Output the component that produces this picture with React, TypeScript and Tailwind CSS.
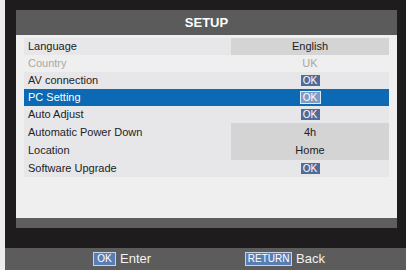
import React from 'react';

type Row = {
  label: string;
  value?: string;
  ok?: boolean;
  cell?: boolean; // grey value cell
  disabled?: boolean;
  selected?: boolean;
  h: string;
  stripe?: boolean;
};

const rows: Row[] = [
  { label: 'Language', value: 'English', cell: true, h: 'h-[17px]', stripe: true },
  { label: 'Country', value: 'UK', disabled: true, h: 'h-[17px]' },
  { label: 'AV connection', ok: true, h: 'h-[17px]', stripe: true },
  { label: 'PC Setting', ok: true, selected: true, h: 'h-[17px]' },
  { label: 'Auto Adjust', ok: true, h: 'h-[17px]', stripe: true },
  { label: 'Automatic Power Down', value: '4h', cell: true, h: 'h-[18px]', stripe: true },
  { label: 'Location', value: 'Home', cell: true, h: 'h-[19px]', stripe: true },
  { label: 'Software Upgrade', ok: true, h: 'h-[17px]', stripe: true },
];

function OkBadge({ selected }: { selected?: boolean }) {
  return (
    <span
      className={`flex h-[11px] w-[19px] items-center justify-center text-[10px] leading-none text-white ${
        selected ? 'bg-[#7f9cc6] outline outline-1 outline-[#dfe8f5]' : 'bg-[#4f6d98]'
      }`}
    >
      OK
    </span>
  );
}

export default function App() {
  return (
    <div
      className="flex h-[270px] w-[406px] overflow-hidden bg-[#1e1c1d]"
      style={{ fontFamily: '"Liberation Sans", Arial, sans-serif' }}
    >
      <div className="w-[5px] shrink-0 bg-[#ececec]" />
      <div className="flex flex-1 flex-col">
        <div className="pl-[11px] pr-[9px] pt-[10px]">
          {/* panel */}
          <div className="flex h-[218px] flex-col bg-[#efefef]">
            <div className="flex h-[25px] items-center justify-center bg-[#5b5b5b] text-[13px] font-bold text-white">
              SETUP
            </div>
            <div className="flex-1 px-[8px] pt-[3px]">
              {rows.map((r) => (
                <div
                  key={r.label}
                  className={`flex ${r.h} items-center text-[11px] ${
                    r.selected
                      ? 'bg-[#0c69b4] text-white'
                      : r.stripe
                        ? 'bg-[#e7e7e9] text-[#222]'
                        : 'text-[#222]'
                  }`}
                >
                  <div
                    className={`flex-1 pl-[4px] ${r.disabled ? 'text-[#a8a8a8]' : ''}`}
                  >
                    {r.label}
                  </div>
                  <div
                    className={`flex h-full w-[158px] items-center justify-center ${
                      r.cell ? 'bg-[#d4d4d4]' : ''
                    } ${r.disabled ? 'text-[#a8a8a8]' : ''}`}
                  >
                    {r.ok ? <OkBadge selected={r.selected} /> : r.value}
                  </div>
                </div>
              ))}
            </div>
            <div className="h-[10px] bg-[#5e5e5e]" />
          </div>
        </div>
        <div className="flex-1" />
        {/* bottom help bar */}
        <div className="flex h-[22px] items-center bg-[#5c5c5c] text-[13px] text-[#f2f2f2]">
          <div className="ml-[88px] flex items-center gap-[4px]">
            <span className="flex h-[14px] w-[23px] items-center justify-center border border-[#c4d2e8] bg-[#5a7db3] text-[10px] leading-none text-white">
              OK
            </span>
            Enter
          </div>
          <div className="ml-[94px] flex items-center gap-[4px]">
            <span className="flex h-[14px] w-[47px] items-center justify-center border border-[#c4d2e8] bg-[#5a7db3] text-[10px] leading-none text-white">
              RETURN
            </span>
            Back
          </div>
        </div>
      </div>
    </div>
  );
}
